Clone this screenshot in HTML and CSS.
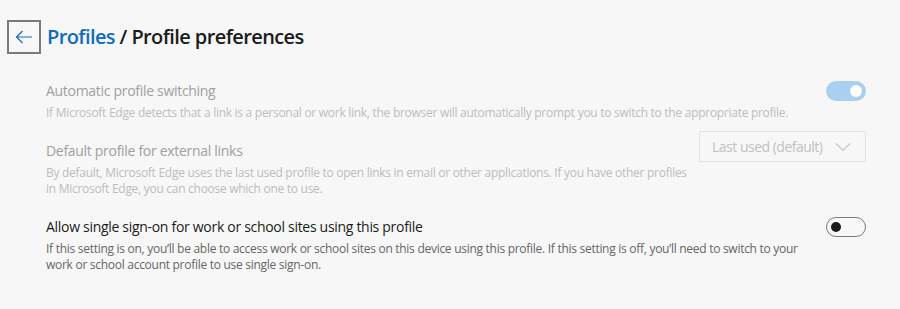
FILE: index.html
```html
<!DOCTYPE html>
<html lang="en">
<head>
    <meta charset="UTF-8">
    <title>Profile preferences</title>
    <link rel="stylesheet" href="styles.css">
</head>
<body>
    <div class="page">
        <!-- En-tête avec retour -->
        <div class="header">
            <button class="back-btn" aria-label="Back">
                <svg width="18" height="14" viewBox="0 0 18 14">
                    <path d="M17 7H1.5M7.5 1L1.5 7l6 6" fill="none" stroke="#0f6cbd" stroke-width="1.2"/>
                </svg>
            </button>
            <h1><span class="crumb">Profiles</span> / Profile preferences</h1>
        </div>

        <div class="settings">
            <!-- Changement automatique -->
            <div class="row disabled">
                <div class="text">
                    <div class="title">Automatic profile switching</div>
                    <div class="desc">If Microsoft Edge detects that a link is a personal or work link, the browser will automatically prompt you to switch to the appropriate profile.</div>
                </div>
                <div class="toggle on"><span class="knob"></span></div>
            </div>

            <!-- Profil par défaut -->
            <div class="row disabled">
                <div class="text">
                    <div class="title">Default profile for external links</div>
                    <div class="desc">By default, Microsoft Edge uses the last used profile to open links in email or other applications. If you have other profiles<br>in Microsoft Edge, you can choose which one to use.</div>
                </div>
                <div class="select">
                    <span>Last used (default)</span>
                    <svg width="16" height="10" viewBox="0 0 16 10">
                        <path d="M1 1.5l7 7 7-7" fill="none" stroke="#c8c8c8" stroke-width="1.2"/>
                    </svg>
                </div>
            </div>

            <!-- Authentification unique -->
            <div class="row">
                <div class="text">
                    <div class="title">Allow single sign-on for work or school sites using this profile</div>
                    <div class="desc">If this setting is on, you’ll be able to access work or school sites on this device using this profile. If this setting is off, you’ll need to switch to your<br>work or school account profile to use single sign-on.</div>
                </div>
                <div class="toggle"><span class="knob"></span></div>
            </div>
        </div>
    </div>
</body>
</html>
```

FILE: styles.css
```css
body {
    margin: 0;
    background: #f7f7f7;
    font-family: "Open Sans", "Noto Sans", sans-serif;
    color: #1b1b1b;
}

.page {
    padding: 20px 34px 0 7px;
}

.header {
    display: flex;
    align-items: center;
    gap: 6px;
    height: 34px;
}

.back-btn {
    width: 34px;
    height: 34px;
    padding: 0;
    border: 2px solid #7a7a7a;
    background: transparent;
    display: flex;
    align-items: center;
    justify-content: center;
}

h1 {
    margin: 0;
    font-size: 20px;
    font-weight: 600;
    letter-spacing: -0.6px;
    line-height: 28px;
    color: #1b1b1b;
}

.crumb {
    color: #0f6cbd;
}

.settings {
    margin: 17px 0 0 39px;
}

.row {
    display: flex;
    align-items: flex-start;
    justify-content: space-between;
    padding: 10px 0;
}

.text {
    flex: 1;
}

.title {
    font-size: 14px;
    line-height: 20px;
    letter-spacing: -0.3px;
}

.desc {
    margin-top: 4px;
    font-size: 12px;
    line-height: 16px;
    letter-spacing: -0.28px;
    color: #666;
    white-space: nowrap;
}

.disabled .title {
    color: #a0a0a0;
}

.disabled .desc {
    color: #bdbdbd;
}

.toggle {
    position: relative;
    width: 40px;
    height: 20px;
    box-sizing: border-box;
    border: 1px solid #7a7a7a;
    border-radius: 10px;
}

.toggle .knob {
    position: absolute;
    top: 4px;
    left: 4px;
    width: 10px;
    height: 10px;
    border-radius: 50%;
    background: #1b1b1b;
}

.toggle.on {
    border: none;
    background: #a9d0ef;
}

.toggle.on .knob {
    top: 4px;
    left: auto;
    right: 4px;
    width: 12px;
    height: 12px;
    background: #fff;
}

.select {
    margin-top: -10px;
    width: 167px;
    height: 31px;
    box-sizing: border-box;
    border: 1px solid #e3e3e3;
    border-radius: 2px;
    display: flex;
    align-items: center;
    justify-content: space-between;
    padding: 0 14px 0 12px;
    font-size: 14px;
    letter-spacing: -0.5px;
    color: #c2c2c2;
}
```
